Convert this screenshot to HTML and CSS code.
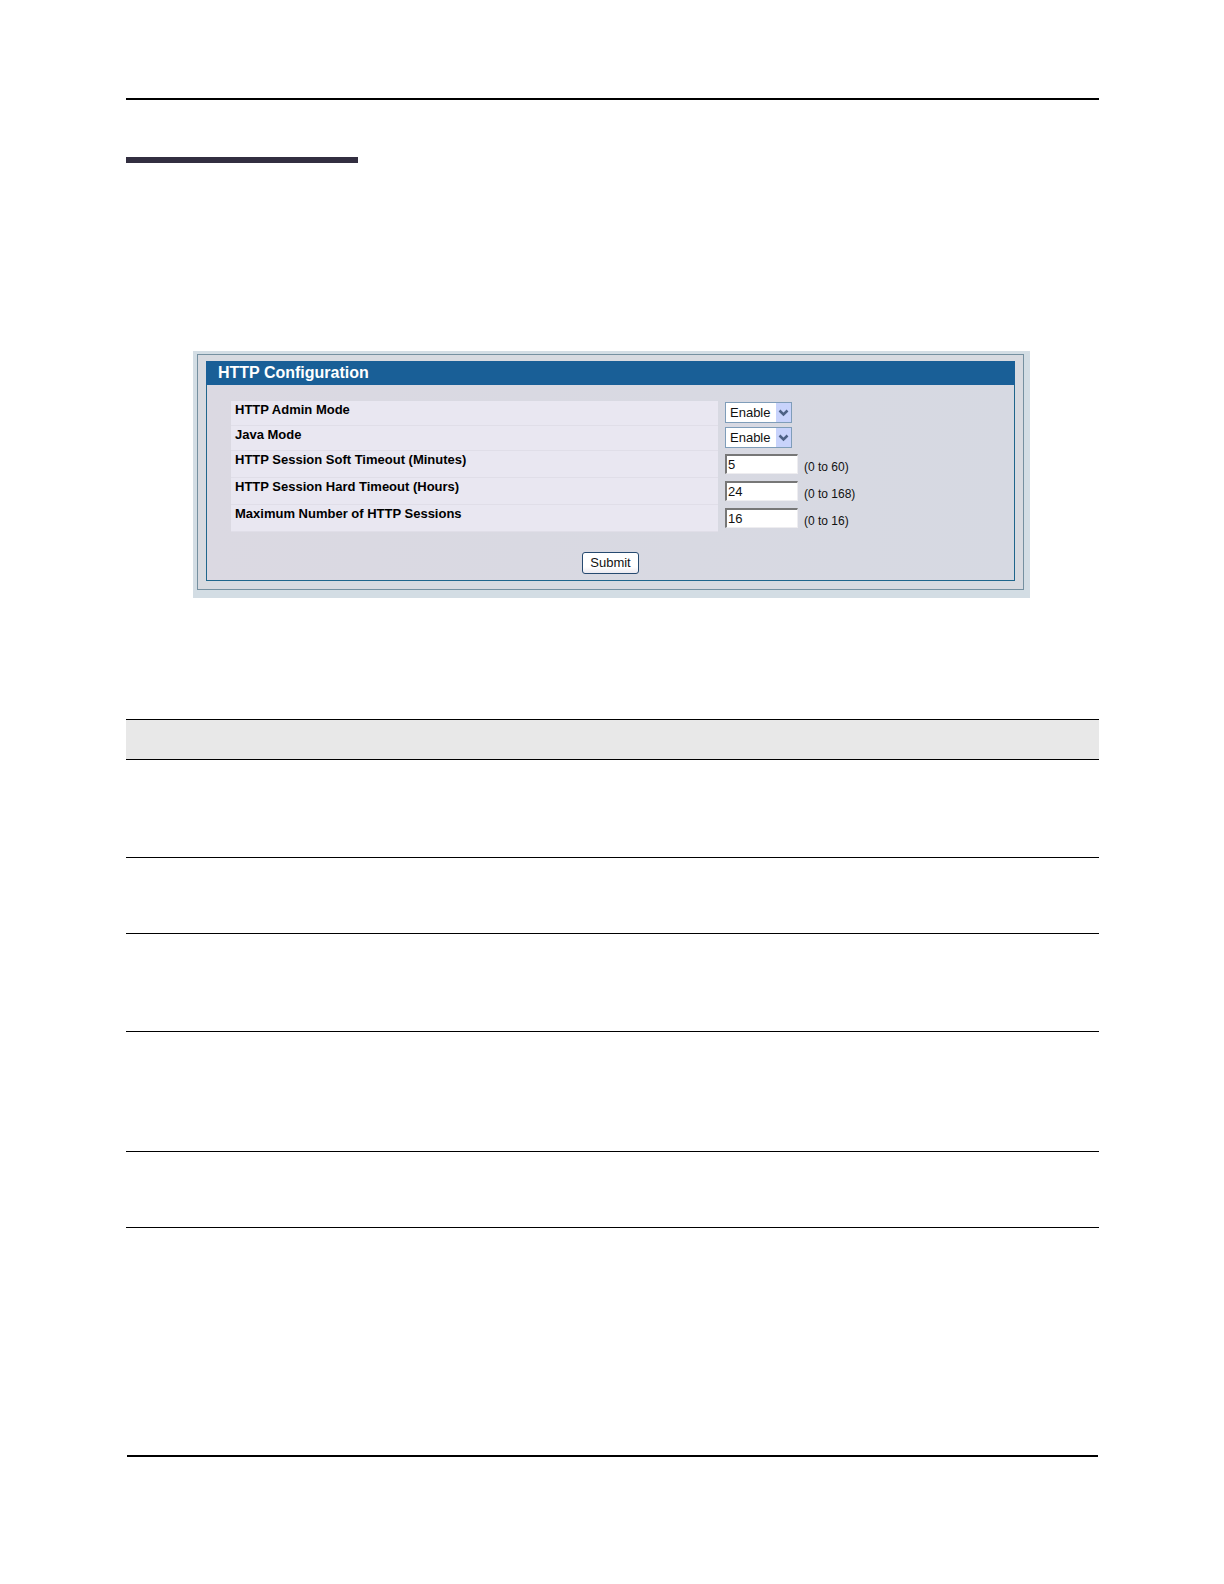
FILE: index.html
```
<!DOCTYPE html>
<html lang="en">
<head>
<meta charset="utf-8">
<meta name="viewport" content="width=device-width, initial-scale=1">
<title>HTTP Configuration</title>
<link rel="stylesheet" href="styles.css">
</head>
<body>
<main class="page">
  <header class="page-head">
    <div class="section-bar"></div>
  </header>

  <form class="panel">
    <div class="frame">
      <section class="box">
        <h1 class="box-title">HTTP Configuration</h1>
        <div class="box-body">
          <div class="row">
            <label class="name" for="admin">HTTP Admin Mode</label>
            <div class="value">
              <span class="picker">
                <select id="admin" class="select"><option>Enable</option><option>Disable</option></select>
                <svg class="arrow" viewBox="0 0 15 19" aria-hidden="true"><path d="M3.5 7.5 7.5 11.5 11.5 7.5"/></svg>
              </span>
            </div>
          </div>
          <div class="row">
            <label class="name" for="java">Java Mode</label>
            <div class="value">
              <span class="picker">
                <select id="java" class="select"><option>Enable</option><option>Disable</option></select>
                <svg class="arrow" viewBox="0 0 15 19" aria-hidden="true"><path d="M3.5 7.5 7.5 11.5 11.5 7.5"/></svg>
              </span>
            </div>
          </div>
          <div class="row row-tall">
            <label class="name" for="soft">HTTP Session Soft Timeout (Minutes)</label>
            <div class="value"><input id="soft" class="text" type="text" value="5"><span class="range">(0 to 60)</span></div>
          </div>
          <div class="row row-tall">
            <label class="name" for="hard">HTTP Session Hard Timeout (Hours)</label>
            <div class="value"><input id="hard" class="text" type="text" value="24"><span class="range">(0 to 168)</span></div>
          </div>
          <div class="row row-tall">
            <label class="name" for="max">Maximum Number of HTTP Sessions</label>
            <div class="value"><input id="max" class="text" type="text" value="16"><span class="range">(0 to 16)</span></div>
          </div>
        </div>
        <div class="actions"><button class="submit" type="button">Submit</button></div>
      </section>
    </div>
  </form>

  <table class="fields">
    <thead><tr class="fields-head"><th></th><th></th></tr></thead>
    <tbody>
      <tr class="lines-three"><td></td><td></td></tr>
      <tr class="lines-two"><td></td><td></td></tr>
      <tr class="lines-three"><td></td><td></td></tr>
      <tr class="lines-four"><td></td><td></td></tr>
      <tr class="lines-two"><td></td><td></td></tr>
    </tbody>
  </table>

  <footer class="page-foot"></footer>
</main>
</body>
</html>
```
FILE: styles.css
```
* { box-sizing: border-box; }

body {
  margin: 0;
  background: #fff;
  color: #111;
  font: 13px/16px "Liberation Sans", Arial, sans-serif;
}

.page {
  display: flex;
  flex-direction: column;
  padding: 98px 125px 127px 126px;
}

.page-head {
  border-top: 2px solid #000;
  padding: 57px 1px 0 0;
}

.section-bar {
  width: 232px;
  height: 6px;
  background: #322e40;
}

/* Configuration panel */
.panel {
  margin: 188px 69px 0 67px;
  padding: 3px 6px 8px 4px;
  background: #d3dde4;
}

.frame {
  border: 1px solid #7590a0;
  padding: 6px 8px 8px;
  background: #d7dae0;
}

.box {
  border: 1px solid #1f668c;
  background: linear-gradient(90deg, #dbd9e2, #d6d9e2);
}

.box-title {
  margin: -1px -1px 0;
  padding: 0 12px;
  background: #195f97;
  color: #fff;
  font-size: 16px;
  font-weight: 700;
  line-height: 24px;
}

.box-body { padding: 16px 0 0 24px; }

.row {
  display: grid;
  grid-template-columns: 487fr 289fr;
  column-gap: 7px;
  height: 25px;
}

.row-tall { height: 27px; }

.name {
  padding: 1px 4px;
  border-bottom: 1px solid #e0dee8;
  background: #e9e7f1;
  font-weight: 700;
  color: #000;
}

.value {
  display: flex;
  align-items: flex-start;
  gap: 6px;
  padding-top: 1px;
}

.row-tall .value { padding-top: 3px; }

.picker {
  position: relative;
  display: flex;
}

.select {
  appearance: none;
  width: 67px;
  height: 21px;
  margin: 0;
  padding: 0 18px 0 4px;
  border: 1px solid #7f9db9;
  border-radius: 0;
  background: #fff;
  color: #111;
  font: 13px/17px "Liberation Sans", Arial, sans-serif;
}

.arrow {
  position: absolute;
  top: 1px;
  right: 1px;
  width: 15px;
  height: 19px;
  background: #c8d3fb;
  pointer-events: none;
}

.arrow path {
  fill: none;
  stroke: #4d6185;
  stroke-width: 2.5;
}

.text {
  width: 73px;
  height: 20px;
  margin: 0;
  padding: 0 1px;
  border: 1px solid #eeedf0;
  border-top: 2px solid #777;
  border-left: 2px solid #777;
  background: #fff;
  color: #111;
  font: 13px/16px "Liberation Sans", Arial, sans-serif;
}

.range { padding-top: 5px; font-size: 12px; }

.actions {
  display: flex;
  justify-content: center;
  padding: 20px 0 6px;
}

.submit {
  width: 57px;
  height: 22px;
  padding: 0;
  border: 1px solid #264a70;
  border-radius: 3px;
  background: linear-gradient(#fff 70%, #eceaf0);
  color: #111;
  font: 13px/18px "Liberation Sans", Arial, sans-serif;
}

/* Field descriptions */
.fields {
  width: 100%;
  margin-top: 121px;
  border-collapse: separate;
  border-spacing: 0;
  border-top: 1px solid #000;
}

.fields th,
.fields td {
  padding: 0;
  border-bottom: 1px solid #000;
}

.fields-head { height: 40px; background: #e8e8e8; }
.lines-two { height: 76px; }
.lines-three { height: 98px; }
.lines-four { height: 120px; }

.page-foot {
  margin: 227px 1px 0;
  border-top: 2px solid #000;
}
```
